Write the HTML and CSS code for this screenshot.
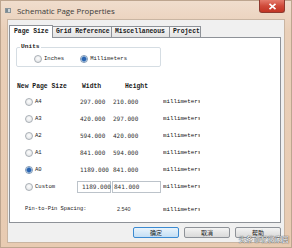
FILE: index.html
```html
<!DOCTYPE html>
<html>
<head>
<meta charset="utf-8">
<link rel="stylesheet" href="styles.css">
</head>
<body>
<div class="window">
  <div class="titlebar">
    <span class="app-icon"></span>
    <span class="title">Schematic Page Properties</span>
    <span class="close"><svg width="9" height="7" viewBox="0 0 9 7"><path d="M1.5 0.8 L7.5 6.2 M7.5 0.8 L1.5 6.2" stroke="#fff" stroke-width="1.6" fill="none"/></svg></span>
  </div>
  <div class="client">
    <div class="tabs">
      <div class="tab active">Page Size</div>
      <div class="tab">Grid Reference</div>
      <div class="tab">Miscellaneous</div>
      <div class="tab">Project</div>
    </div>
    <div class="panel">
      <fieldset class="units">
        <legend>Units</legend>
        <div class="unit-row">
          <span class="opt"><span class="radio"></span><span class="lbl">Inches</span></span>
          <span class="opt"><span class="radio on"></span><span class="lbl">Millimeters</span></span>
        </div>
      </fieldset>
      <div class="grid head">
        <span class="h1">New Page Size</span>
        <span class="h2">Width</span>
        <span class="h3">Height</span>
        <span></span>
      </div>
      <div class="grid row"><span class="opt2"><span class="radio"></span><span class="lbl">A4</span></span><span class="num">297.000</span><span class="num">210.000</span><span class="mm">millimeters</span></div>
      <div class="grid row"><span class="opt2"><span class="radio"></span><span class="lbl">A3</span></span><span class="num">420.000</span><span class="num">297.000</span><span class="mm">millimeters</span></div>
      <div class="grid row"><span class="opt2"><span class="radio"></span><span class="lbl">A2</span></span><span class="num">594.000</span><span class="num">420.000</span><span class="mm">millimeters</span></div>
      <div class="grid row"><span class="opt2"><span class="radio"></span><span class="lbl">A1</span></span><span class="num">841.000</span><span class="num">594.000</span><span class="mm">millimeters</span></div>
      <div class="grid row"><span class="opt2"><span class="radio on"></span><span class="lbl">A0</span></span><span class="num">1189.000</span><span class="num">841.000</span><span class="mm">millimeters</span></div>
      <div class="grid row"><span class="opt2"><span class="radio"></span><span class="lbl">Custom</span></span><span class="box box-w">1189.000</span><span class="box box-h">841.000</span><span class="mm">millimeters</span></div>
      <div class="grid pin"><span class="pin-lbl">Pin-to-Pin Spacing:</span><span></span><span class="pin-val">2.540</span><span class="mm">millimeters</span></div>
    </div>
    <div class="buttons">
      <span class="btn default">确定</span>
      <span class="btn">取消</span>
      <span class="btn">帮助</span>
    </div>
  </div>
  <div class="watermark">头条 @忆微家园</div>
</div>
</body>
</html>
```
FILE: styles.css
```css
* { box-sizing: border-box; }
html, body { margin: 0; padding: 0; }
body { width: 292px; height: 248px; overflow: hidden; background: #e7cbb3; }
.window {
  position: relative;
  width: 292px; height: 248px;
  background: linear-gradient(#f0ddcd, #e9cfb8 30px, #e8cbb2);
  border: 1px solid #bda58f;
  display: flex; flex-direction: column;
}
.titlebar {
  height: 18px; display: flex; align-items: center;
  padding-left: 4px; position: relative;
}
.app-icon {
  width: 6px; height: 5px; margin-top: 1px;
  background: linear-gradient(90deg, #7b8a92 0 2px, #cfd6da 2px);
  border: 1px solid #8a959b;
}
.title {
  margin-left: 6px; margin-top: 1px;
  font-family: "Open Sans", "Noto Sans", sans-serif; font-size: 7.9px;
  color: #3a3a3a;
}
.close {
  position: absolute; right: 6px; top: -1px;
  width: 26px; height: 13px;
  background: linear-gradient(#e47b6c, #cf4a3a 50%, #c23424);
  border: 1px solid #8f3a2f; border-top: none;
  border-radius: 0 0 3px 3px;
  display: flex; align-items: center; justify-content: center;
}
.client {
  margin: 0 6px 0 6px;
  height: 224px;
  background: #f0f0f0;
  border: 1px solid #c9b5a2;
  display: flex; flex-direction: column;
}
.tabs {
  display: flex; align-items: flex-end;
  margin: 4px 0 0 1px; height: 13px;
}
.tab {
  font-family: "Liberation Mono", monospace; font-size: 6.4px; font-weight: bold;
  color: #1a1a1a;
  height: 11px; line-height: 10px;
  border: 1px solid #8e9298; border-bottom: none; border-left: none;
  background: linear-gradient(#f6f6f6, #e3e3e3);
  padding: 0 3px;
  white-space: nowrap;
}
.tab:nth-child(2) { width: 59px; padding-left: 3px; }
.tab:nth-child(3) { width: 58px; }
.tab:nth-child(4) { width: 31px; }
.tab.active {
  height: 13px; width: 44px; line-height: 11px;
  background: #fff; border-left: 1px solid #8e9298;
  padding-left: 4px; position: relative; z-index: 1; margin-bottom: -1px;
}
.panel {
  margin: 0 3px 0 1px;
  height: 186px;
  background: #fff;
  border: 1px solid #8e9298;
  font-family: "Liberation Mono", monospace;
  color: #1a1a1a;
}
.units {
  margin: 5px 0 0 6px; padding: 0 0 0 3px;
  width: 145px; min-width: 0;
  border: 1px solid #d5dde3; border-radius: 2px;
}
.units legend {
  padding: 0 1px; font-size: 6.2px; line-height: 8px; font-weight: bold;
}
.unit-row { height: 15px; display: flex; align-items: center; padding-left: 14px; }
.opt { display: flex; align-items: center; }
.opt + .opt { margin-left: 16px; }
.radio {
  width: 8px; height: 8px; border-radius: 50%;
  border: 1px solid #a9afb5;
  background: radial-gradient(circle at 50% 40%, #fdfdfd, #dcdfe2);
  display: inline-block; flex: none;
}
.radio.on {
  background: radial-gradient(circle, #2a64b0 0 1.6px, #5f93cf 2.4px, #e2e8ef 3px);
  border-color: #7e98b6;
}
.lbl { margin-left: 2px; font-size: 5.6px; color: #222; }
.grid {
  display: grid;
  grid-template-columns: 63px 33px 50px 40px;
  padding-left: 7px; align-items: center;
}
.head { margin-top: 13px; height: 13px; font-size: 6.4px; font-weight: bold; }
.h2 { padding-left: 2px; }
.h3 { padding-left: 12px; }
.row { height: 17px; }
.opt2 { display: flex; align-items: center; padding-left: 8px; }
.num { font-family: "DejaVu Sans Mono", monospace; font-size: 6px; color: #333; }
.mm { font-size: 5.8px; white-space: nowrap; overflow: hidden; width: 37px; color: #111; }
.box {
  font-family: "DejaVu Sans Mono", monospace; font-size: 6px; color: #333;
  height: 12px; line-height: 10px;
  border: 1px solid #bcc3ca; background: #fff;
}
.box-w { margin-left: -3px; width: 34px; padding-left: 4px; }
.box-h { margin-left: -1px; width: 49px; padding-left: 1px; }
.pin { margin-top: 8px; height: 12px; padding-left: 15px; grid-template-columns: 55px 33px 50px 40px; }
.pin-lbl { font-size: 5.4px; white-space: nowrap; }
.pin-val { font-family: "Liberation Sans", sans-serif; font-size: 5.4px; color: #333; padding-left: 4px; }
.buttons {
  display: flex; justify-content: flex-end; gap: 5px;
  margin: 4px 3px 0 0;
}
.btn {
  width: 46px; height: 11px;
  border: 1px solid #8e9298; border-radius: 2px;
  background: linear-gradient(#f4f4f4, #e6e6e6 50%, #dadada);
  font-family: "Noto Sans CJK SC", sans-serif; font-size: 6px; color: #1a1a1a;
  display: flex; align-items: center; justify-content: center;
}
.btn.default { border-color: #3b8ad1; background: linear-gradient(#eaf4fc, #d6e9f8 50%, #c4def4); }
.watermark {
  position: absolute; right: 2px; bottom: 3px;
  font-family: "Noto Sans CJK SC", sans-serif; font-size: 7px;
  color: #fff; text-shadow: 0 0 1px #333, 0 0 1px #333;
}
```
